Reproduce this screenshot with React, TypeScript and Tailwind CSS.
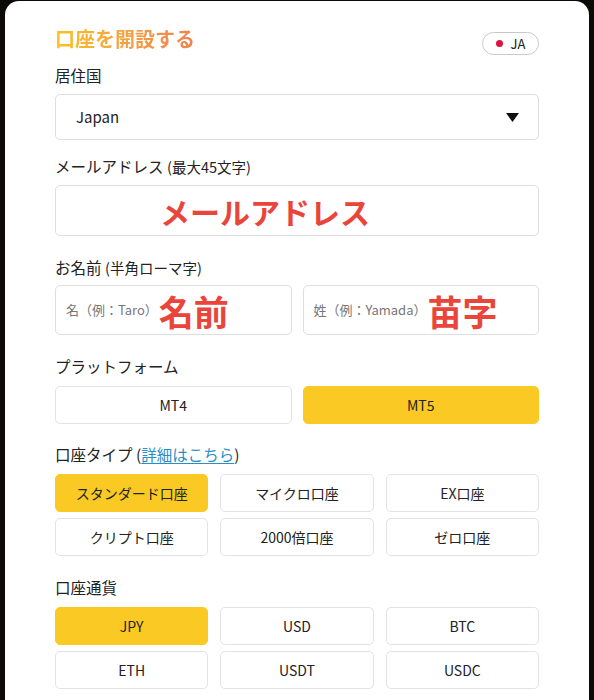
const font = { fontFamily: '"Noto Sans CJK JP", "Noto Sans", sans-serif' };

export default function App() {
  return (
    <main
      className="min-h-[700px] bg-[#0b0a06] px-[5px] pt-px overflow-hidden"
      style={font}
    >
      <div className="bg-white rounded-t-[14px] px-[50px] pt-[24px] pb-[30px] text-[#222]">
        <Header />

        <Label className="mt-[9px]">居住国</Label>
        <CountrySelect />

        <Label className="mt-[15px]">
          メールアドレス <span className="text-[14.5px]">(最大45文字)</span>
        </Label>
        <div className="mt-[8px] h-[51px] border border-[#dedede] rounded-[5px] flex items-center pl-[104px]">
          <span className="text-[30px] font-bold text-[#e9453b] leading-none">
            メールアドレス
          </span>
        </div>

        <Label className="mt-[20px]">
          お名前 <span className="text-[14.5px]">(半角ローマ字)</span>
        </Label>
        <div className="mt-[7px] grid grid-cols-2 gap-[11px]">
          <NameInput placeholder="名（例：Taro）" overlay="名前" />
          <NameInput placeholder="姓（例：Yamada）" overlay="苗字" />
        </div>

        <Label className="mt-[20px]">プラットフォーム</Label>
        <div className="mt-[9px] grid grid-cols-2 gap-[11px]">
          <Choice label="MT4" />
          <Choice label="MT5" active />
        </div>

        <Label className="mt-[19px]">
          口座タイプ (
          <a href="#" className="text-[#2b8fc4] underline underline-offset-2">
            詳細はこちら
          </a>
          )
        </Label>
        <div className="mt-[9px] grid grid-cols-3 gap-x-[12px] gap-y-[6px]">
          <Choice label="スタンダード口座" active />
          <Choice label="マイクロ口座" />
          <Choice label="EX口座" />
          <Choice label="クリプト口座" />
          <Choice label="2000倍口座" />
          <Choice label="ゼロ口座" />
        </div>

        <Label className="mt-[20px]">口座通貨</Label>
        <div className="mt-[9px] grid grid-cols-3 gap-x-[12px] gap-y-[6px]">
          <Choice label="JPY" active />
          <Choice label="USD" />
          <Choice label="BTC" />
          <Choice label="ETH" />
          <Choice label="USDT" />
          <Choice label="USDC" />
        </div>
      </div>
    </main>
  );
}

function Header() {
  return (
    <div className="flex justify-between items-start">
      <h1 className="text-[20px] font-bold leading-[28px] bg-gradient-to-r from-[#fbc11f] to-[#ee8150] bg-clip-text text-transparent w-fit">
        口座を開設する
      </h1>
      <button className="mt-[7px] h-[23px] w-[57px] border border-[#c9c9c9] rounded-full flex items-center justify-center gap-[8px] text-[13px] text-[#222]">
        <span className="w-[7px] h-[7px] rounded-full bg-[#e0123c]" />
        JA
      </button>
    </div>
  );
}

function Label({ children, className = "" }: { children: React.ReactNode; className?: string }) {
  return (
    <p className={`h-[22px] text-[15.5px] leading-[22px] whitespace-nowrap ${className}`}>
      {children}
    </p>
  );
}

function CountrySelect() {
  return (
    <div className="mt-[8px] h-[46px] border border-[#dedede] rounded-[5px] flex items-center justify-between pl-[20px] pr-[19px]">
      <span className="text-[15px]">Japan</span>
      <svg width="13" height="9" viewBox="0 0 13 9">
        <polygon points="0,0 13,0 6.5,9" fill="#111" />
      </svg>
    </div>
  );
}

function NameInput({ placeholder, overlay }: { placeholder: string; overlay: string }) {
  return (
    <div className="h-[50px] border border-[#dedede] rounded-[5px] flex items-center pl-[10px]">
      <span className="text-[13px] text-[#777]">{placeholder}</span>
      <span className="ml-[1px] text-[35px] font-bold text-[#e9453b] leading-none">{overlay}</span>
    </div>
  );
}

function Choice({ label, active = false }: { label: string; active?: boolean }) {
  return (
    <button
      className={`h-[38px] rounded-[5px] text-[14px] flex items-center justify-center ${
        active ? "bg-[#fbc923] border border-[#fbc923]" : "bg-white border border-[#e3e3e3]"
      }`}
    >
      {label}
    </button>
  );
}
